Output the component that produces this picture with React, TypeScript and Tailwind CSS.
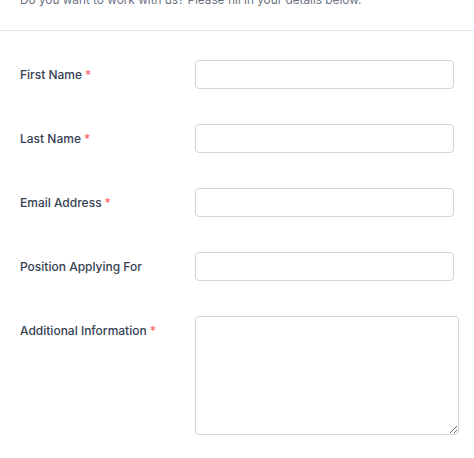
const FIELDS = [
  { label: 'First Name', required: true },
  { label: 'Last Name', required: true },
  { label: 'Email Address', required: true },
  { label: 'Position Applying For', required: false },
];

export default function App() {
  return (
    <div className="min-h-screen w-[474px] bg-white font-['Inter',sans-serif]">
      <div className="-mt-[10px] border-b border-gray-200 px-5 pb-[20px]">
        <p className="text-[11.8px] leading-5 text-gray-500">
          Do you want to work with us? Please fill in your details below.
        </p>
      </div>

      <form className="px-5 pt-[29px]">
        {FIELDS.map((f) => (
          <div key={f.label} className="mb-[35px] grid grid-cols-[175px_1fr] items-start">
            <label className="pt-[6px] text-[12px] font-medium leading-[18px] text-gray-700">
              {f.label}
              {f.required ? <span className="ml-[3px] text-red-400">*</span> : null}
            </label>
            <input
              type="text"
              className="h-[29px] w-full rounded border border-gray-300 bg-white px-2 text-sm"
            />
          </div>
        ))}

        <div className="grid grid-cols-[175px_1fr] items-start">
          <label className="pt-[6px] text-[12px] font-medium leading-[18px] text-gray-700">
            Additional Information
            <span className="ml-[3px] text-red-400">*</span>
          </label>
          <textarea className="block h-[119px] w-[264px] rounded border border-gray-300 bg-white px-2 text-sm" />
        </div>
      </form>
    </div>
  );
}
